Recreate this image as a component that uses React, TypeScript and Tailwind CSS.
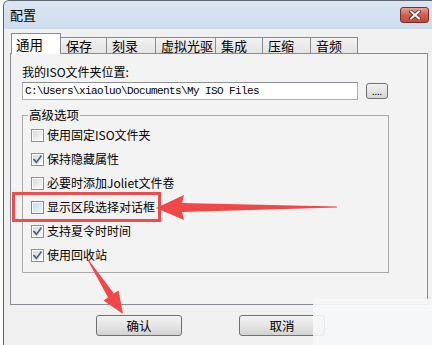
import React from "react";

const CJK = "font-['Noto_Sans_CJK_SC',sans-serif]";

function Check() {
  return (
    <svg width="9" height="9" viewBox="0 0 9 9" className="block">
      <path d="M1 4.6 L3.4 7.4 L8 1.2" fill="none" stroke="#4a5f8f" strokeWidth="1.7" strokeLinecap="square" />
    </svg>
  );
}

function Box({ checked, hot }: { checked?: boolean; hot?: boolean }) {
  return (
    <span
      className={
        hot
          ? "w-[13px] h-[13px] border border-[#5b8fbf] bg-white p-px flex shrink-0"
          : "w-[13px] h-[13px] border border-[#8e8f8f] bg-white p-px flex shrink-0"
      }
    >
      <span
        className={
          hot
            ? "flex-1 flex items-center justify-center bg-gradient-to-br from-[#bfe0f7] to-[#e9f5fd]"
            : "flex-1 flex items-center justify-center bg-gradient-to-br from-[#d8d8d8] to-[#fbfbfb]"
        }
      >
        {checked ? <Check /> : null}
      </span>
    </span>
  );
}

function Row({ label, checked, hot }: { label: string; checked?: boolean; hot?: boolean }) {
  return (
    <div className="h-[24px] flex items-center gap-[3px] pl-[8px]">
      <Box checked={checked} hot={hot} />
      <span className="text-[12px] leading-[16px] text-black">{label}</span>
    </div>
  );
}

function Btn({ label }: { label: string }) {
  return (
    <div className="w-[86px] h-[21px] rounded-[3px] border border-[#707070] bg-gradient-to-b from-[#f2f2f2] via-[#e6e6e6] to-[#d2d2d2] flex items-center justify-center text-[12.5px] leading-[16px] text-black">
      {label}
    </div>
  );
}

const tabs = [
  { label: "保存", w: "w-[46px]" },
  { label: "刻录", w: "w-[49px]" },
  { label: "虚拟光驱", w: "w-[60px]" },
  { label: "集成", w: "w-[47px]" },
  { label: "压缩", w: "w-[48px]" },
  { label: "音频", w: "w-[47px]" },
];

export default function App() {
  return (
    <div className={`relative w-[432px] h-[345px] overflow-hidden bg-white ${CJK}`}>
      <div className="ml-[3px] h-full border-l border-t border-[#5c6470] rounded-tl-[6px] bg-[#f0f0f0] flex flex-col">
        {/* title bar */}
        <div className="h-[28px] shrink-0 rounded-tl-[5px] bg-gradient-to-b from-[#dbe6f3] to-[#cddcec] flex items-center justify-between pl-[6px] pr-[3px]">
          <span className="text-[13px] leading-[16px] text-black">配置</span>
          <div className="w-[29px] h-[16px] rounded-[3px] border border-[#7a3028] bg-gradient-to-b from-[#e8a193] via-[#d25d4d] to-[#c4473a] flex items-center justify-center">
            <svg width="12" height="10" viewBox="0 0 12 10">
              <path d="M2 1.5 L10 8.5 M10 1.5 L2 8.5" stroke="#5a2a24" strokeWidth="3.6" strokeLinecap="square" />
              <path d="M2 1.5 L10 8.5 M10 1.5 L2 8.5" stroke="#ffffff" strokeWidth="2" strokeLinecap="square" />
            </svg>
          </div>
        </div>

        {/* tabs */}
        <div className="pt-[4px]">
          <div className="ml-[7px] h-[20px] flex items-end">
            <div className="relative z-10 w-[50px] h-[21px] -mb-px bg-white border-l border-t border-r border-[#898c95] flex items-center pl-[4px] text-[13.5px] leading-[16px] text-black">
              通用
            </div>
            {tabs.map((t) => (
              <div
                key={t.label}
                className={`${t.w} h-[16px] border-t border-r border-[#898c95] bg-gradient-to-b from-[#f2f2f2] to-[#e3e3e3] flex items-center pl-[5px] text-[13px] leading-[16px] text-black`}
              >
                {t.label}
              </div>
            ))}
          </div>

          {/* panel */}
          <div className="ml-[6px] w-[418px] h-[252px] border border-[#898c95] bg-[#f3f3f3] pl-[11px] pt-[10px]">
            <div className="text-[12px] leading-[16px] text-black">我的ISO文件夹位置:</div>
            <div className="mt-[2px] flex items-center gap-[8px]">
              <div className="w-[336px] h-[18px] border border-[#abadb3] border-t-[#8e9097] bg-white flex items-center pl-[2px] font-['Liberation_Mono',monospace] text-[11px] tracking-[-0.6px] text-black">
                C:\Users\xiaoluo\Documents\My ISO Files
              </div>
              <div className="w-[22px] h-[16px] rounded-[3px] border border-[#707070] bg-gradient-to-b from-[#f2f2f2] to-[#d6d6d6] flex items-center justify-center text-[9px] leading-[9px] text-black">
                ....
              </div>
            </div>
            <fieldset className="mt-[7px] w-[367px] h-[166px] border border-[#a9a9a9] pb-[5px]">
              <legend className="ml-[5px] px-[1px] text-[12.5px] leading-[16px] text-black">高级选项</legend>
              <Row label="使用固定ISO文件夹" />
              <Row label="保持隐藏属性" checked />
              <Row label="必要时添加Joliet文件卷" />
              <Row label="显示区段选择对话框" hot />
              <Row label="支持夏令时时间" checked />
              <Row label="使用回收站" checked />
            </fieldset>
          </div>

          {/* buttons */}
          <div className="mt-[10px] pl-[92px] flex gap-[57px]">
            <Btn label="确认" />
            <Btn label="取消" />
          </div>
        </div>
      </div>

      {/* faded watermark area */}
      <div className="absolute left-[313px] top-[299px] w-[119px] h-[46px] bg-[#f6f7f9]/90" />

      {/* annotation: red rectangle */}
      <div className="absolute left-[12px] top-[192px] w-[149px] h-[30px] border-[3px] border-[#ef4d4d]" />

      {/* annotation arrows */}
      <svg className="absolute left-0 top-0 pointer-events-none" width="432" height="345" viewBox="0 0 432 345">
        <polygon
          points="156,208 184,195 182,203 337,206.6 337,207.4 182,212 184,220"
          fill="#f04848"
        />
        <polygon
          points="123,314 118.5,290.6 113.9,293.6 88.4,259.7 87.6,260.3 108.1,297.4 103.5,300.4"
          fill="#f04848"
        />
      </svg>
    </div>
  );
}
